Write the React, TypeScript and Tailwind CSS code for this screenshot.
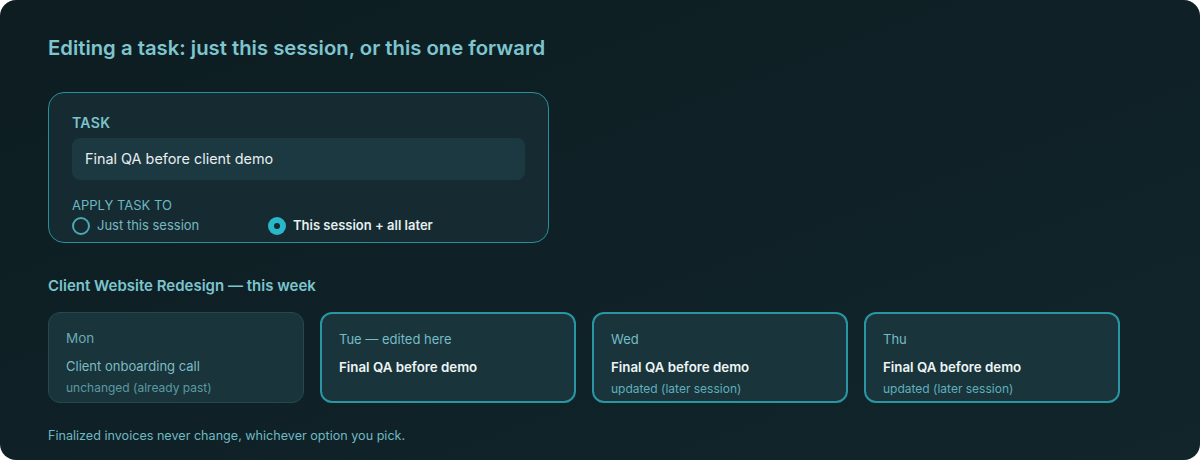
import React from 'react';

type Day = {
  day: string;
  title: string;
  note?: string;
  past?: boolean;
};

const days: Day[] = [
  { day: 'Mon', title: 'Client onboarding call', note: 'unchanged (already past)', past: true },
  { day: 'Tue — edited here', title: 'Final QA before demo' },
  { day: 'Wed', title: 'Final QA before demo', note: 'updated (later session)' },
  { day: 'Thu', title: 'Final QA before demo', note: 'updated (later session)' },
];

function Radio({ label, checked }: { label: string; checked?: boolean }) {
  return (
    <label className="flex items-center gap-[7px]">
      {checked ? (
        <span className="flex h-[18px] w-[18px] items-center justify-center rounded-full bg-[#2bb7ca]">
          <span className="h-[6px] w-[6px] rounded-full bg-[#122a30]" />
        </span>
      ) : (
        <span className="h-[18px] w-[18px] rounded-full border-2 border-[#4aa7b3]" />
      )}
      <span className={checked ? 'text-[13px] font-semibold text-[#e6eff0]' : 'text-[13px] text-[#78b8c1]'}>
        {label}
      </span>
    </label>
  );
}

function DayCard({ d }: { d: Day }) {
  return (
    <div
      className={[
        'h-[91px] w-[256px] rounded-xl px-[17px] pt-[15px] bg-[#19343b]',
        d.past ? 'border-[1.5px] border-[#27474f]' : 'border-2 border-[#2a95a3]',
      ].join(' ')}
    >
      <div className={d.past ? 'text-[13.5px] leading-5 text-[#6aaab3]' : 'text-[13px] leading-5 text-[#76bcc6]'}>
        {d.day}
      </div>
      <div
        className={
          d.past
            ? 'mt-2 text-[13px] leading-5 text-[#7dbcc4]'
            : 'mt-2 text-[13.3px] leading-5 font-semibold text-[#eef4f5]'
        }
      >
        {d.title}
      </div>
      {d.note && (
        <div
          className={
            d.past
              ? 'mt-[2px] text-[12px] leading-5 text-[#5c9aa3]'
              : 'mt-[2px] text-[12px] leading-5 text-[#5fb0bb]'
          }
        >
          {d.note}
        </div>
      )}
    </div>
  );
}

export default function App() {
  return (
    <div className="h-[460px] w-[1200px] bg-white font-['Inter','Liberation_Sans',sans-serif]">
      <div className="h-full w-full rounded-2xl bg-gradient-to-br from-[#0d1d22] to-[#11252a] px-12 pt-[34px]">
        <h1 className="text-[20.3px] leading-7 font-semibold text-[#7ec5ce]">
          Editing a task: just this session, or this one forward
        </h1>

        <div className="mt-[30px] h-[151px] w-[501px] rounded-2xl border-[1.5px] border-[#2a8f9c] bg-[#152b31] px-[23px] pt-5">
          <div className="text-sm leading-5 font-semibold tracking-wide text-[#7cc3cc]">TASK</div>
          <div className="mt-[5px] flex h-[42px] items-center rounded-lg bg-[#1c3840] px-[13px] text-[14.4px] text-[#e6eef0]">
            Final QA before client demo
          </div>
          <div className="mt-[15px] text-[13px] leading-5 text-[#6db7c1]">APPLY TASK TO</div>
          <div className="mt-px flex items-center">
            <div className="w-[196px]">
              <Radio label="Just this session" />
            </div>
            <Radio label="This session + all later" checked />
          </div>
        </div>

        <h2 className="mt-[31px] text-[15px] leading-6 font-semibold text-[#7cc4ce]">
          Client Website Redesign — this week
        </h2>

        <div className="mt-[14px] flex gap-4">
          {days.map((d, i) => (
            <DayCard key={i} d={d} />
          ))}
        </div>

        <p className="mt-[23px] text-[12.6px] leading-5 text-[#6fb8c2]">
          Finalized invoices never change, whichever option you pick.
        </p>
      </div>
    </div>
  );
}
